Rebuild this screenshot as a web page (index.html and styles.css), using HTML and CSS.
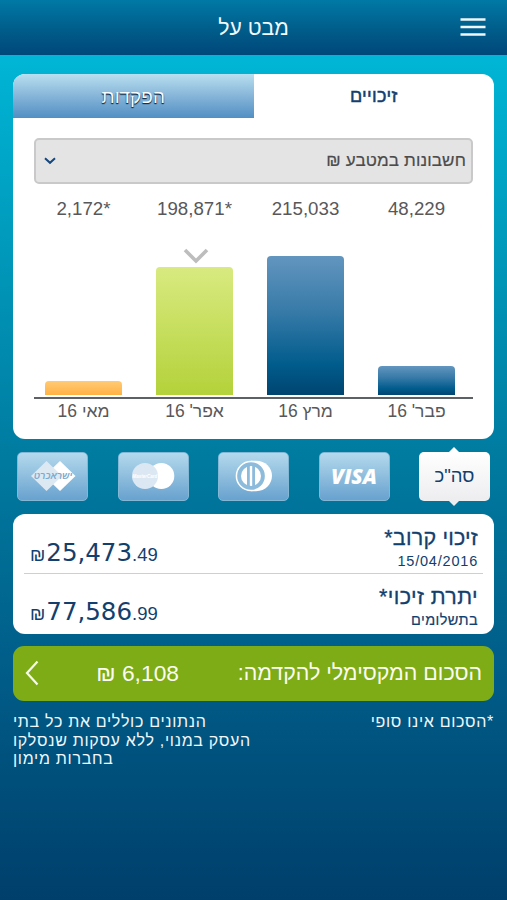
FILE: index.html
```
<!DOCTYPE html>
<html lang="he" dir="rtl">
<head>
<meta charset="utf-8">
<title>מבט על</title>
<link rel="stylesheet" href="styles.css">
</head>
<body>
<header class="topbar">
  <h1 class="title">מבט על</h1>
  <svg class="menu" width="26" height="20" viewBox="0 0 26 20"><path d="M.5 2.6h25M.5 10h25M.5 17.4h25" stroke="#eef8fc" stroke-width="2.500"/></svg>
</header>
<main class="content">
  <section class="card">
    <nav class="tabs">
      <div class="tab tab-active"><span class="tab-credits">זיכויים</span></div>
      <div class="tab tab-idle"><span class="tab-deposits">הפקדות</span></div>
    </nav>
    <div class="select">
      <span class="select-label">חשבונות במטבע ₪</span>
      <svg width="12" height="8" viewBox="0 0 12 8"><path d="M1 1.2l5 4.600 5-4.600" fill="none" stroke="#17487c" stroke-width="2"/></svg>
    </div>
    <div class="chart">
      <div class="col"><div class="value">48,229</div><div class="plot"><div class="bar blue" style="height:29px"></div></div></div>
      <div class="col"><div class="value">215,033</div><div class="plot"><div class="bar blue" style="height:139px"></div></div></div>
      <div class="col"><div class="value" dir="ltr">198,871*</div><div class="plot"><svg class="pointer" width="26" height="16" viewBox="0 0 26 16"><path d="M2 2l11 11L24 2" fill="none" stroke="#bdbdbd" stroke-width="3.600"/></svg><div class="bar green" style="height:128px"></div></div></div>
      <div class="col"><div class="value" dir="ltr">2,172*</div><div class="plot"><div class="bar orange" style="height:14px"></div></div></div>
    </div>
    <div class="axis"></div>
    <div class="months"><span>פבר' 16</span><span>מרץ 16</span><span>אפר' 16</span><span>מאי 16</span></div>
  </section>
  <div class="brands">
    <div class="brand brand-total"><span>סה"כ</span></div>
    <div class="brand"><span class="visa">VISA</span></div>
    <div class="brand"><svg width="40" height="32" viewBox="0 0 40 32"><path d="M17 .8h5c9.500 0 16 6.800 16 15s-6.500 15.400-16 15.400h-5z" fill="#fff"/><circle cx="17" cy="16" r="14.600" fill="#8dbbdc" stroke="#fff" stroke-width="1.500"/><circle cx="17" cy="16" r="10" fill="#fff"/><path d="M13 5h2.800v22H13zM18.200 5H21v22h-2.800z" fill="#8dbbdc"/></svg></div>
    <div class="brand"><svg width="46" height="28" viewBox="0 0 46 28"><circle cx="31.300" cy="14" r="13" fill="#fff"/><circle cx="15" cy="14" r="13" fill="#dbe8f3"/><text x="2.500" y="15.500" class="mc">MasterCard</text></svg></div>
    <div class="brand"><svg width="48" height="34" viewBox="0 0 48 34"><path d="M31 2l15.500 15L31 32 15.500 17z" fill="#fff"/><path d="M17.500 2L33 17 17.500 32 2 17z" fill="#dce9f3"/><text x="24" y="19.500" class="isra">ישראכרט</text></svg></div>
  </div>
  <section class="summary">
    <div class="row">
      <div class="desc"><div class="name n1">זיכוי קרוב*</div><div class="date">15/04/2016</div></div>
      <div class="amount" dir="ltr"><span class="cur">₪</span><span class="whole">25,473</span><span class="cents">.49</span></div>
    </div>
    <div class="row row-two">
      <div class="desc"><div class="name n2">יתרת זיכוי*</div><div class="sub">בתשלומים</div></div>
      <div class="amount" dir="ltr"><span class="cur">₪</span><span class="whole">77,586</span><span class="cents">.99</span></div>
    </div>
  </section>
  <div class="advance">
    <span class="adv-label">הסכום המקסימלי להקדמה:</span>
    <span class="adv-value">6,108 ₪</span>
    <svg width="14" height="26" viewBox="0 0 14 26"><path d="M12.500 1.500L2 13l10.500 11.500" fill="none" stroke="#f5fae8" stroke-width="2.200"/></svg>
  </div>
  <footer class="notes">
    <div class="note-a">*הסכום אינו סופי</div>
    <div class="note-b"><div class="l1">הנתונים כוללים את כל בתי</div><div class="l2">העסק במנוי, ללא עסקות שנסלקו</div><div class="l3">בחברות מימון</div></div>
  </footer>
</main>
</body>
</html>
```
FILE: styles.css
```
* { box-sizing: border-box; }
body {
  margin: 0;
  height: 900px;
  overflow: hidden;
  font-family: "Liberation Sans", Arial, sans-serif;
  color: #12406e;
  white-space: nowrap;
  background: linear-gradient(#00b6d6 55px, #00b0d0 90px, #007ca1 450px, #005f8a 655px, #003f6c 900px);
}
.topbar {
  display: grid;
  grid-template-columns: 60px 1fr 60px;
  align-items: center;
  height: 55px;
  background: linear-gradient(#0079a6, #005f8c 50%, #00477a);
}
.title {
  grid-column: 2;
  grid-row: 1;
  margin: 0;
  padding-top: 1px;
  text-align: center;
  font-weight: normal;
  font-size: 21.200px;
  color: #f2fafd;
}
.menu { grid-column: 1; grid-row: 1; justify-self: end; margin-left: 13px; margin-top: -1px; }
.content { padding: 19px 13px 0; }
.card {
  height: 364.500px;
  border-radius: 12px;
  background: #fff;
  overflow: hidden;
}
.tabs { display: flex; height: 44px; }
.tab {
  flex: 1;
  display: flex;
  align-items: center;
  justify-content: center;
  padding-top: 1px;
  font-size: 19px;
}
.tab-active { font-size: 18px; -webkit-text-stroke: .5px currentColor; letter-spacing: .3px; }
.tab-idle {
  color: #f6fbff;
  text-shadow: 0 1px 1px #17304a, 0 1px 1px #17304a;
  background: linear-gradient(#b9dff0, #86b5d9 50%, #518fc3);
}
.select {
  display: flex;
  align-items: center;
  justify-content: space-between;
  height: 46px;
  margin: 20px 21px 0;
  padding: 0 5px 0 8px;
  border: 2px solid #c9c9c9;
  border-radius: 5px;
  background: #e4e4e4;
  color: #4b4b4b;
  font-size: 17px;
  letter-spacing: .15px;
  -webkit-text-stroke: .2px currentColor;
}
.chart, .months {
  display: grid;
  grid-template-columns: repeat(4, 111px);
  padding-right: 22px;
  text-align: center;
}
.value { height: 51px; padding-top: 14px; font-size: 18.700px; line-height: 22px; color: #58585a; }
.plot {
  display: flex;
  flex-direction: column;
  align-items: center;
  justify-content: flex-end;
  height: 160px;
}
.bar { width: 77px; border-radius: 4px 4px 0 0; }
.blue { background: linear-gradient(#6296bf, #377aa8 40%, #005c8c 78%, #004470); }
.green { background: linear-gradient(#d8ea80, #b4d23a); }
.orange { background: linear-gradient(#ffcb75, #ffb243); }
.pointer { margin-bottom: 3px; margin-right: -2px; }
.axis { height: 2px; margin: 2px 21px 0; background: #5c6165; }
.months { font-size: 17.500px; line-height: 22px; padding-top: 1px; color: #58585a; }
.brands {
  display: flex;
  justify-content: space-between;
  margin: 13px 4px 0;
}
.brand {
  position: relative;
  display: flex;
  align-items: center;
  justify-content: center;
  width: 71px;
  height: 49px;
  border-radius: 5px;
  border: 1px solid #83b7d4;
  background: linear-gradient(#b4d9ed, #68a2ce);
}
.brand-total {
  border: 0;
  background: linear-gradient(#fff, #ededf0);
  font-size: 18.500px;
}
.brand-total::before, .brand-total::after {
  content: "";
  position: absolute;
  left: 30px;
  border: 5px solid transparent;
}
.brand-total::before { top: -5px; border-top: 0; border-bottom-color: #fff; }
.brand-total::after { bottom: -5px; border-bottom: 0; border-top-color: #ededf0; }
.visa { font: italic 800 21px "Open Sans", sans-serif; color: #fff; }
.mc { font: italic bold 4.500px "Liberation Sans", sans-serif; fill: #fff; direction: ltr; }
.isra { font: italic bold 9.200px "Liberation Sans", sans-serif; fill: #7ea9cd; text-anchor: middle; }
.summary {
  height: 120px;
  margin-top: 13px;
  padding: 0 11px;
  border-radius: 12px;
  background: #fff;
}
.row {
  display: flex;
  justify-content: space-between;
  height: 60px;
  padding: 12px 5px 0 6px;
  border-bottom: 1px solid #cfcfcf;
}
.row-two { border: 0; padding-top: 11px; }
.name { font-size: 21.500px; line-height: 24px; -webkit-text-stroke: .3px currentColor; }
.n1 { letter-spacing: .2px; }
.n2 { letter-spacing: .4px; }
.date { font-size: 14.500px; line-height: 22px; letter-spacing: .8px; }
.sub { font-size: 14.500px; line-height: 22px; letter-spacing: .4px; -webkit-text-stroke: .2px currentColor; }
.amount { display: flex; align-items: baseline; padding-top: 11px; line-height: 32px; }
.cur { font-size: 18px; margin-right: 1px; }
.whole { font: 24.500px/32px "DejaVu Sans", sans-serif; }
.cents { font-size: 18.500px; }
.advance {
  display: grid;
  grid-template-columns: 303px 1fr 14px;
  align-items: center;
  height: 55px;
  margin-top: 12px;
  padding: 0 12px;
  border-radius: 11px;
  background: #7eac16;
  color: #fbfdf3;
}
.adv-label { font-size: 21.400px; padding-top: 1px; }
.adv-value { font-size: 22.800px; }
.notes {
  display: flex;
  justify-content: space-between;
  padding-top: 12.500px;
  color: #f1f8fc;
  font-size: 16px;
  line-height: 18.500px;
  letter-spacing: .7px;
}
.note-b { text-align: left; }
```
